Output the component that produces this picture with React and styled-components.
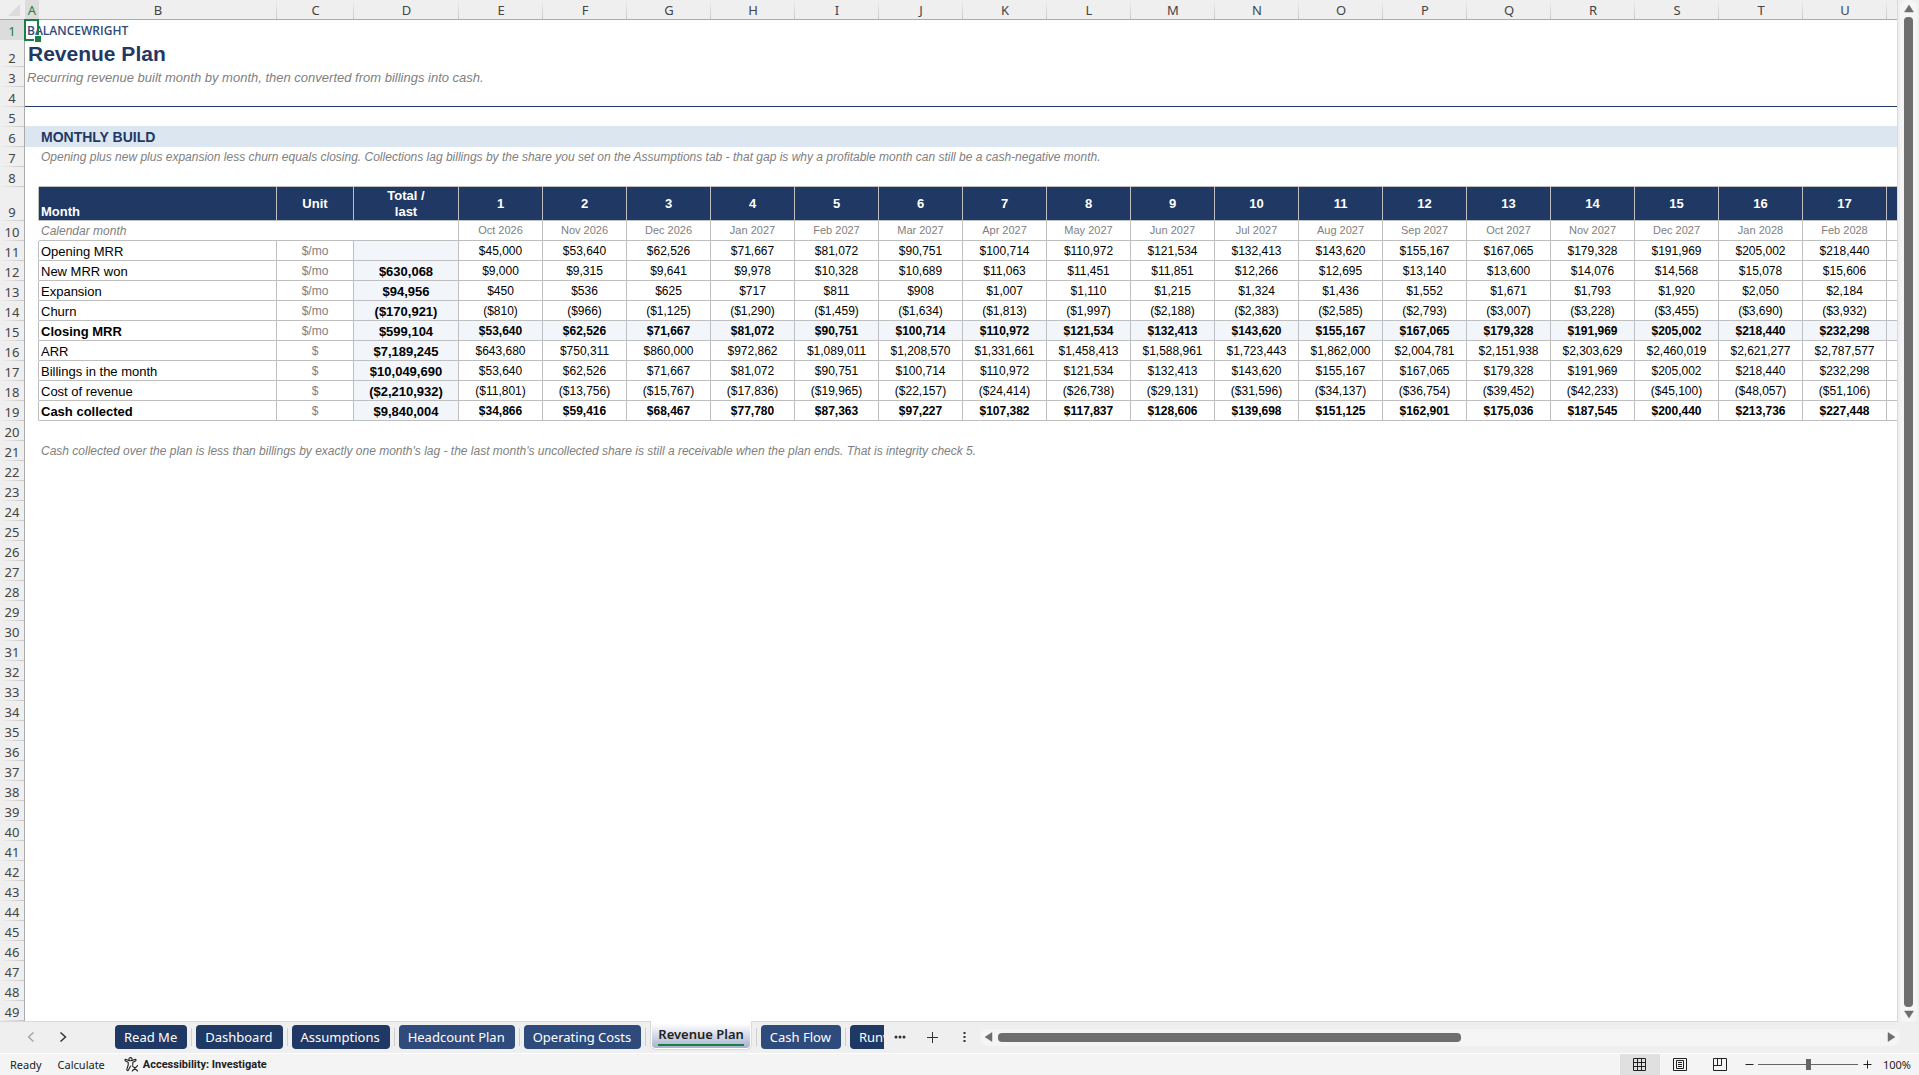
import React, { useState } from "react";
import styled, { createGlobalStyle } from "styled-components";

const navy = "#1f3864";
const blue = "#2f4b7c";
const green = "#1a7f45";
const line = "#bfbfbf";
const tint = "#f2f5fa";
const band = "#dce6f0";
const arial = '"Liberation Sans", Arial, sans-serif';
const ui = '"Noto Sans", "Open Sans", "Segoe UI", sans-serif';

const columns = "ABCDEFGHIJKLMNOPQRSTU".split("");

const months = [
  "Oct 2026", "Nov 2026", "Dec 2026", "Jan 2027", "Feb 2027", "Mar 2027",
  "Apr 2027", "May 2027", "Jun 2027", "Jul 2027", "Aug 2027", "Sep 2027",
  "Oct 2027", "Nov 2027", "Dec 2027", "Jan 2028", "Feb 2028",
];

const lines = [
  {
    label: "Opening MRR",
    unit: "$/mo",
    total: "",
    values: "$45,000 $53,640 $62,526 $71,667 $81,072 $90,751 $100,714 $110,972 $121,534 $132,413 $143,620 $155,167 $167,065 $179,328 $191,969 $205,002 $218,440",
  },
  {
    label: "New MRR won",
    unit: "$/mo",
    total: "$630,068",
    values: "$9,000 $9,315 $9,641 $9,978 $10,328 $10,689 $11,063 $11,451 $11,851 $12,266 $12,695 $13,140 $13,600 $14,076 $14,568 $15,078 $15,606",
  },
  {
    label: "Expansion",
    unit: "$/mo",
    total: "$94,956",
    values: "$450 $536 $625 $717 $811 $908 $1,007 $1,110 $1,215 $1,324 $1,436 $1,552 $1,671 $1,793 $1,920 $2,050 $2,184",
  },
  {
    label: "Churn",
    unit: "$/mo",
    total: "($170,921)",
    values: "($810) ($966) ($1,125) ($1,290) ($1,459) ($1,634) ($1,813) ($1,997) ($2,188) ($2,383) ($2,585) ($2,793) ($3,007) ($3,228) ($3,455) ($3,690) ($3,932)",
  },
  {
    label: "Closing MRR",
    unit: "$/mo",
    total: "$599,104",
    bold: true,
    filled: true,
    values: "$53,640 $62,526 $71,667 $81,072 $90,751 $100,714 $110,972 $121,534 $132,413 $143,620 $155,167 $167,065 $179,328 $191,969 $205,002 $218,440 $232,298",
  },
  {
    label: "ARR",
    unit: "$",
    total: "$7,189,245",
    values: "$643,680 $750,311 $860,000 $972,862 $1,089,011 $1,208,570 $1,331,661 $1,458,413 $1,588,961 $1,723,443 $1,862,000 $2,004,781 $2,151,938 $2,303,629 $2,460,019 $2,621,277 $2,787,577",
  },
  {
    label: "Billings in the month",
    unit: "$",
    total: "$10,049,690",
    values: "$53,640 $62,526 $71,667 $81,072 $90,751 $100,714 $110,972 $121,534 $132,413 $143,620 $155,167 $167,065 $179,328 $191,969 $205,002 $218,440 $232,298",
  },
  {
    label: "Cost of revenue",
    unit: "$",
    total: "($2,210,932)",
    values: "($11,801) ($13,756) ($15,767) ($17,836) ($19,965) ($22,157) ($24,414) ($26,738) ($29,131) ($31,596) ($34,137) ($36,754) ($39,452) ($42,233) ($45,100) ($48,057) ($51,106)",
  },
  {
    label: "Cash collected",
    unit: "$",
    total: "$9,840,004",
    bold: true,
    values: "$34,866 $59,416 $68,467 $77,780 $87,363 $97,227 $107,382 $117,837 $128,606 $139,698 $151,125 $162,901 $175,036 $187,545 $200,440 $213,736 $227,448",
  },
];

const tabs = [
  { name: "Read Me", color: navy },
  { name: "Dashboard", color: navy },
  { name: "Assumptions", color: navy },
  { name: "Headcount Plan", color: blue },
  { name: "Operating Costs", color: blue },
  { name: "Revenue Plan", active: true },
  { name: "Cash Flow", color: blue },
  { name: "Runway", color: navy },
];

const emptyRows = (from, to) =>
  Array.from({ length: to - from + 1 }, (_, i) => from + i);

function Row({ n, tall, children }) {
  return (
    <SheetRow $tall={tall}>
      <RowHead scope="row" $selected={n === 1}>{n}</RowHead>
      {children || <Cell colSpan={22} />}
    </SheetRow>
  );
}

function Sheet() {
  return (
    <Grid>
      <colgroup>
        <Col $w={25} />
        <Col $w={14} />
        <Col $w={238} />
        <Col $w={77} />
        <Col $w={105} />
        {months.map((m) => <Col $w={84} key={m} />)}
        <Col $w={84} />
      </colgroup>
      <thead>
        <tr>
          <Corner>
            <svg width="12" height="12" viewBox="0 0 12 12">
              <path d="M12 0V12H0Z" fill="#dcdcdc" />
            </svg>
          </Corner>
          {columns.map((c) => (
            <ColHead scope="col" key={c} $selected={c === "A"}>{c}</ColHead>
          ))}
          <ColHead />
        </tr>
      </thead>
      <tbody>
        <Row n={1}>
          <BrandCell colSpan={22}>
            BALANCEWRIGHT
            <Selection />
          </BrandCell>
        </Row>
        <Row n={2} tall={27}>
          <TitleCell colSpan={22}>Revenue Plan</TitleCell>
        </Row>
        <Row n={3}>
          <SubtitleCell colSpan={22}>
            Recurring revenue built month by month, then converted from billings into cash.
          </SubtitleCell>
        </Row>
        <Row n={4}><Cell colSpan={22} $bottom={navy} /></Row>
        <Row n={5}><Cell colSpan={22} $bottom={band} /></Row>
        <Row n={6}>
          <Cell $fill={band} />
          <SectionCell colSpan={21} $fill={band}>MONTHLY BUILD</SectionCell>
        </Row>
        <Row n={7}>
          <Cell />
          <NoteCell colSpan={21}>
            Opening plus new plus expansion less churn equals closing. Collections lag billings by the share
            you set on the Assumptions tab - that gap is why a profitable month can still be a cash-negative month.
          </NoteCell>
        </Row>
        <Row n={8}>
          <Cell />
          <Cell colSpan={21} $bottom={line} />
        </Row>
        <Row n={9} tall={34}>
          <Cell $right={line} />
          <MonthHead scope="col">Month</MonthHead>
          <HeadCell scope="col">Unit</HeadCell>
          <HeadCell scope="col">Total /<br />last</HeadCell>
          {months.map((m, i) => <HeadCell scope="col" key={m}>{i + 1}</HeadCell>)}
          <HeadCell />
        </Row>
        <Row n={10}>
          <Cell />
          <CalendarCell $bottom={line}>Calendar month</CalendarCell>
          <Cell $bottom={line} />
          <Cell $bottom={line} $right={line} />
          {months.map((m) => <DateCell key={m} $bottom={line} $right={line}>{m}</DateCell>)}
          <DateCell $bottom={line} $right={line} />
        </Row>
        {lines.map((l, i) => (
          <Row n={11 + i} key={l.label}>
            <Cell $right={line} />
            <Cell $bottom={line} $right={line} $bold={l.bold}>{l.label}</Cell>
            <UnitCell $bottom={line} $right={line}>{l.unit}</UnitCell>
            <TotalCell $bottom={line} $right={line} $fill={tint} $bold>{l.total}</TotalCell>
            {l.values.split(" ").map((v, k) => (
              <ValueCell key={months[k]} $bottom={line} $right={line} $bold={l.bold} $fill={l.filled && tint}>
                {v}
              </ValueCell>
            ))}
            <ValueCell $bottom={line} $right={line} $fill={l.filled && tint} />
          </Row>
        ))}
        <Row n={20} />
        <Row n={21}>
          <Cell />
          <NoteCell colSpan={21}>
            Cash collected over the plan is less than billings by exactly one month's lag - the last month's
            uncollected share is still a receivable when the plan ends. That is integrity check 5.
          </NoteCell>
        </Row>
        {emptyRows(22, 49).map((n) => <Row n={n} key={n} />)}
      </tbody>
    </Grid>
  );
}

function Arrow({ dir }) {
  const shapes = {
    up: "M5 1L9.5 8H0.5Z",
    down: "M5 8L9.5 1H0.5Z",
    left: "M1 5L8 0.5V9.5Z",
    right: "M8 5L1 0.5V9.5Z",
  };
  return (
    <svg width="10" height="10" viewBox="0 0 10 10">
      <path d={shapes[dir]} fill="#6e6e6e" stroke="#6e6e6e" strokeLinejoin="round" strokeWidth="0.5" />
    </svg>
  );
}

function TabBar() {
  return (
    <Bar>
      <NavButtons>
        <IconButton aria-label="Previous sheet">
          <svg width="10" height="12" viewBox="0 0 10 12" fill="none" stroke="#a0a0a0" strokeWidth="1.3">
            <path d="M7.5 1.5L2.5 6L7.5 10.5" />
          </svg>
        </IconButton>
        <IconButton aria-label="Next sheet">
          <svg width="10" height="12" viewBox="0 0 10 12" fill="none" stroke="#333" strokeWidth="1.5">
            <path d="M2.5 1.5L7.5 6L2.5 10.5" />
          </svg>
        </IconButton>
      </NavButtons>
      <TabStrip>
        {tabs.map((t, i) => (
          <React.Fragment key={t.name}>
            {i > 0 && <Divider />}
            {t.active ? (
              <ActiveTab><ActiveFace><span>{t.name}</span></ActiveFace></ActiveTab>
            ) : (
              <Tab $color={t.color}>{t.name}</Tab>
            )}
          </React.Fragment>
        ))}
      </TabStrip>
      <IconButton aria-label="More sheets">
        <svg width="12" height="4" viewBox="0 0 12 4" fill="#333">
          <circle cx="2" cy="2" r="1.5" />
          <circle cx="6" cy="2" r="1.5" />
          <circle cx="10" cy="2" r="1.5" />
        </svg>
      </IconButton>
      <IconButton aria-label="New sheet">
        <svg width="11" height="11" viewBox="0 0 11 11" stroke="#333" strokeWidth="1">
          <path d="M5.5 0V11M0 5.5H11" />
        </svg>
      </IconButton>
      <IconButton aria-label="Resize tabs">
        <svg width="3" height="12" viewBox="0 0 3 12" fill="#333">
          <path d="M0.5 1h2v2h-2zM0.5 5h2v2h-2zM0.5 9h2v2h-2z" />
        </svg>
      </IconButton>
      <HScroll>
        <Arrow dir="left" />
        <HRail><HThumb /></HRail>
        <Arrow dir="right" />
      </HScroll>
    </Bar>
  );
}

function StatusBar() {
  const [zoom, setZoom] = useState(100);
  return (
    <Status>
      <StatusText>Ready</StatusText>
      <StatusText>Calculate</StatusText>
      <AccessButton>
        <svg width="15" height="15" viewBox="0 0 15 15" fill="none" stroke="#222" strokeWidth="1.1" strokeLinejoin="round" strokeLinecap="round">
          <circle cx="6.5" cy="2.2" r="1.6" />
          <path d="M5 3.6L2 2.4C1 2.1 .5 3.4 1.5 3.9L4.2 5.2V8L2.8 12.4C2.6 13.6 3.9 14 4.4 13L6.5 9.2" />
          <path d="M8 3.6L11 2.4C12 2.1 12.5 3.4 11.5 3.9L8.8 5.2V7.4" />
          <path d="M8.2 8.6L13.6 14M13.6 8.6L8.2 14" />
        </svg>
        Accessibility: Investigate
      </AccessButton>
      <Spacer />
      <ViewButton aria-label="Normal view" $active>
        <svg width="14" height="14" viewBox="0 0 14 14" fill="none" stroke="#222">
          <path d="M.5 .5H12.5V12.5H.5ZM4.5 .5V12.5M8.5 .5V12.5M.5 4.5H12.5M.5 8.5H12.5" />
        </svg>
      </ViewButton>
      <ViewButton aria-label="Page layout view">
        <svg width="14" height="14" viewBox="0 0 14 14" fill="none" stroke="#222">
          <path d="M.5 .5H13.5V12.5H.5ZM3.5 2.5H10.5V10.5H3.5ZM5 4.5H9M5 6.5H9M5 8.5H9" />
        </svg>
      </ViewButton>
      <ViewButton aria-label="Page break view">
        <svg width="14" height="14" viewBox="0 0 14 14" fill="none" stroke="#222">
          <path d="M.5 .5H13.5V12.5H.5ZM4.5 .5V7.5M8.5 .5V7.5M.5 7.5H8.5" />
        </svg>
      </ViewButton>
      <ZoomButton aria-label="Zoom out">
        <svg width="9" height="9" viewBox="0 0 9 9" stroke="#222"><path d="M.5 4.5H8.5" /></svg>
      </ZoomButton>
      <ZoomRange
        type="range"
        aria-label="Zoom"
        min="10"
        max="190"
        value={zoom}
        onChange={(e) => setZoom(Number(e.target.value))}
      />
      <ZoomButton aria-label="Zoom in">
        <svg width="9" height="9" viewBox="0 0 9 9" stroke="#222"><path d="M.5 4.5H8.5M4.5 .5V8.5" /></svg>
      </ZoomButton>
      <ZoomValue>{zoom}%</ZoomValue>
    </Status>
  );
}

export default function App() {
  return (
    <Page>
      <GlobalStyle />
      <Workspace>
        <SheetPane><Sheet /></SheetPane>
        <VScroll>
          <Arrow dir="up" />
          <VThumb />
          <Arrow dir="down" />
        </VScroll>
      </Workspace>
      <TabBar />
      <StatusBar />
    </Page>
  );
}

const GlobalStyle = createGlobalStyle`
  * {
    box-sizing: border-box;
  }
  body {
    margin: 0;
    background: #efefef;
  }
  button {
    border: none;
    background: transparent;
    padding: 0;
    font-family: ${ui};
    cursor: pointer;
  }
  svg {
    display: block;
    flex: none;
  }
`;

const Page = styled.div`
  display: flex;
  flex-direction: column;
  height: 100vh;
  background: #efefef;
  font-family: ${ui};
`;

const Workspace = styled.div`
  display: flex;
  flex: 1;
  min-height: 0;
`;

const SheetPane = styled.main`
  flex: 1;
  min-width: 0;
  overflow: hidden;
  background: #fff;
  border-right: 1px solid #dadada;
  border-bottom: 1px solid #dadada;
`;

const Grid = styled.table`
  width: 1971px;
  table-layout: fixed;
  border-collapse: separate;
  border-spacing: 0;
  font-family: ${arial};
`;

const Col = styled.col`
  width: ${(p) => p.$w}px;
`;

const SheetRow = styled.tr`
  height: ${(p) => p.$tall || 20}px;
`;

const Corner = styled.td`
  height: 20px;
  padding: 4px 5px 3px 8px;
  background: #efefef;
  border-bottom: 1px solid #ababab;
`;

const ColHead = styled.th`
  height: 20px;
  padding: 2px 0 0;
  font: 400 13px/17px ${ui};
  text-align: center;
  color: ${(p) => (p.$selected ? green : "#444")};
  background: ${(p) =>
    p.$selected
      ? "#dcdcdc"
      : "linear-gradient(#efefef, #c8c8c8) right / 1px 100% no-repeat #efefef"};
  border-bottom: 1px solid #ababab;
`;

const RowHead = styled.th`
  padding: 0;
  font: 400 13px/18px ${ui};
  text-align: center;
  vertical-align: bottom;
  color: ${(p) => (p.$selected ? green : "#444")};
  background: ${(p) =>
    p.$selected
      ? "#dcdcdc"
      : "linear-gradient(90deg, #efefef, #c8c8c8) bottom / 100% 1px no-repeat #efefef"};
  border-right: 1px solid #ababab;
`;

const Cell = styled.td`
  padding: 0 0 0 2px;
  font-size: 13px;
  line-height: 17px;
  font-weight: ${(p) => (p.$bold ? 700 : 400)};
  white-space: nowrap;
  vertical-align: bottom;
  color: #000;
  background: ${(p) => p.$fill || "transparent"};
  border-bottom: 1px solid ${(p) => p.$bottom || "transparent"};
  border-right: ${(p) => (p.$right ? `1px solid ${p.$right}` : "none")};
`;

const BrandCell = styled(Cell)`
  position: relative;
  font-family: "Open Sans", sans-serif;
  font-size: 12px;
  font-weight: 600;
  color: ${blue};
`;

/* outline and fill handle of the selected cell, drawn over the grid */
const Selection = styled.span`
  position: absolute;
  left: -1px;
  top: -1px;
  width: 15px;
  height: 22px;
  border: 2px solid ${green};
  &::after {
    content: "";
    position: absolute;
    right: -4px;
    bottom: -3px;
    width: 6px;
    height: 6px;
    background: ${green};
    border: solid #fff;
    border-width: 1px 0 0 1px;
  }
`;

const TitleCell = styled(Cell)`
  padding-left: 3px;
  font-size: 21px;
  line-height: 24px;
  font-weight: 700;
  color: ${navy};
`;

const SubtitleCell = styled(Cell)`
  font-style: italic;
  color: #808080;
`;

const SectionCell = styled(Cell)`
  font-size: 14px;
  font-weight: 700;
  color: ${navy};
`;

const NoteCell = styled(Cell)`
  font-size: 12px;
  font-style: italic;
  color: #808080;
`;

const CalendarCell = styled(NoteCell)``;

const HeadCell = styled.th`
  padding: 0;
  font-size: 13px;
  line-height: 16px;
  font-weight: 700;
  text-align: center;
  vertical-align: middle;
  color: #fff;
  background: ${navy};
  border-right: 1px solid ${line};
  border-bottom: 1px solid ${line};
`;

const MonthHead = styled(HeadCell)`
  padding-left: 2px;
  text-align: left;
  vertical-align: bottom;
`;

const ValueCell = styled(Cell)`
  padding: 0;
  font-size: 12px;
  text-align: center;
`;

const TotalCell = styled(ValueCell)`
  font-size: 13px;
`;

const UnitCell = styled(ValueCell)`
  color: #808080;
`;

const DateCell = styled(ValueCell)`
  font-size: 11px;
  line-height: 19px;
  color: #808080;
`;

const VScroll = styled.div`
  display: flex;
  flex-direction: column;
  align-items: center;
  gap: 3px;
  width: 17px;
  margin: 0 2px -2px 2px;
  padding: 4px 0;
  border-radius: 8px;
  background: #f5f5f5;
`;

const VThumb = styled.div`
  flex: 1;
  width: 9px;
  border-radius: 4px;
  background: #6e6e6e;
`;

const Bar = styled.nav`
  display: flex;
  align-items: center;
  height: 31px;
  padding-bottom: 1px;
  background: #efefef;
`;

const NavButtons = styled.div`
  display: flex;
  padding: 0 36px 0 15px;
`;

const IconButton = styled.button`
  display: flex;
  align-items: center;
  justify-content: center;
  flex: none;
  width: 32px;
  height: 24px;
`;

const TabStrip = styled.div`
  display: flex;
  align-items: center;
  align-self: stretch;
  flex: 0 1 769px;
  min-width: 0;
  margin-top: -1px;
  padding-top: 1px;
  overflow: hidden;
`;

const Tab = styled.button`
  flex: none;
  height: 24px;
  padding: 0 10px 0 9px;
  border-radius: 4px;
  font-size: 13px;
  line-height: 24px;
  color: #fff;
  background: ${(p) => p.$color};
`;

const Divider = styled.span`
  flex: none;
  width: 1px;
  height: 18px;
  margin: 0 4px;
  background: #cfcfcf;
`;

const ActiveTab = styled.button`
  flex: none;
  align-self: flex-start;
  height: 29px;
  margin-top: -1px;
  padding: 0 1px 1px;
  border: 1px solid #dadada;
  border-top: none;
  border-radius: 0 0 6px 6px;
  background: #fff;
`;

const ActiveFace = styled.span`
  display: block;
  height: 27px;
  padding: 3px 6px 0;
  border-radius: 0 0 4px 4px;
  background: linear-gradient(#fff 10%, #a6b2cd);
  span {
    display: block;
    height: 22px;
    border-bottom: 2px solid ${green};
    font-size: 13px;
    line-height: 20px;
    font-weight: 600;
    color: #222;
  }
`;

const HScroll = styled.div`
  display: flex;
  align-items: center;
  flex: 1;
  gap: 4px;
  height: 17px;
  margin-right: 19px;
  padding: 0 3px 0 4px;
  border-radius: 8px;
  background: #f5f5f5;
`;

const HRail = styled.div`
  flex: 1;
`;

const HThumb = styled.div`
  width: 52.3%;
  height: 9px;
  border-radius: 4px;
  background: #6e6e6e;
`;

const Status = styled.footer`
  display: flex;
  align-items: center;
  height: 22px;
  border-top: 1px solid #fff;
  padding: 0 8px 0 10px;
  background: #f4f4f4;
`;

const StatusText = styled.span`
  margin-right: 16px;
  font-size: 11px;
  line-height: 20px;
  color: #222;
`;

const AccessButton = styled.button`
  display: flex;
  align-items: center;
  gap: 4px;
  margin-left: 3px;
  font-family: Roboto, sans-serif;
  font-size: 11px;
  font-weight: 700;
  color: #222;
`;

const Spacer = styled.div`
  flex: 1;
`;

const ViewButton = styled.button`
  display: flex;
  align-items: center;
  justify-content: center;
  width: 40px;
  height: 21px;
  background: ${(p) => (p.$active ? "#e0e0e0" : "transparent")};
`;

const ZoomButton = styled.button`
  display: flex;
  align-items: center;
  justify-content: center;
  width: 18px;
  height: 21px;
`;

const ZoomRange = styled.input`
  appearance: none;
  width: 100px;
  height: 11px;
  margin: 0;
  background: linear-gradient(#666, #666) center / 100% 1px no-repeat;
  &::-webkit-slider-thumb {
    appearance: none;
    width: 5px;
    height: 11px;
    background: #666;
  }
`;

const ZoomValue = styled.span`
  width: 35px;
  font-size: 11px;
  text-align: right;
  color: #222;
`;
